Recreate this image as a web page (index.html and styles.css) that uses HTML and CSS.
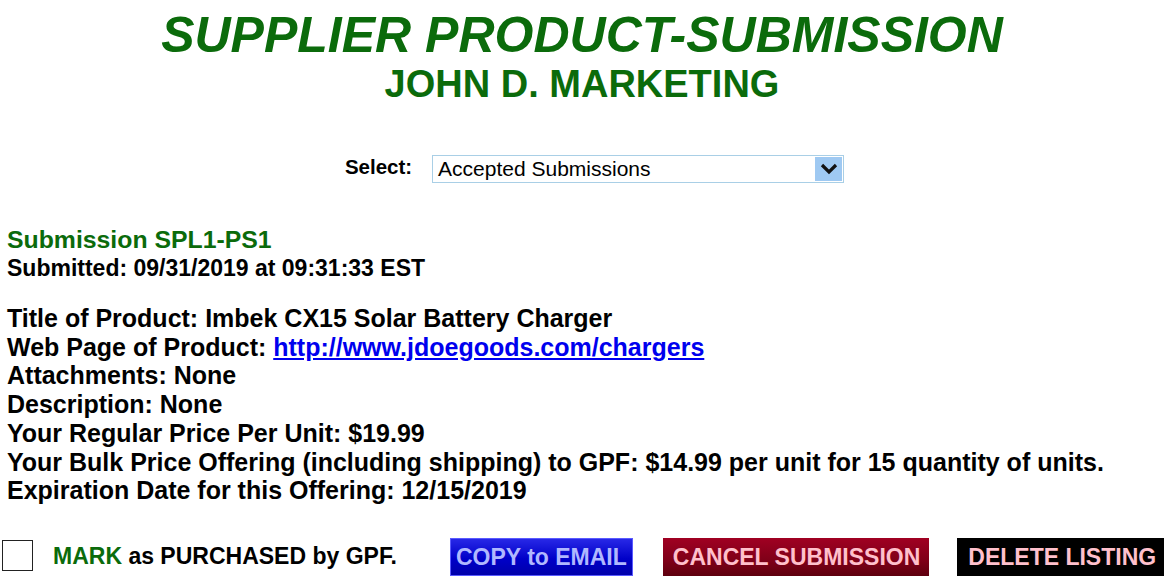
FILE: index.html
```html
<!DOCTYPE html>
<html>
<head>
<meta charset="utf-8">
<link rel="stylesheet" href="styles.css">
</head>
<body>
<header class="head">
  <h1 class="title">SUPPLIER PRODUCT-SUBMISSION</h1>
  <h2 class="subtitle">JOHN D. MARKETING</h2>
</header>
<div class="select-row">
  <label class="select-label">Select:</label>
  <div class="select-box">
    <span class="select-value">Accepted Submissions</span>
    <span class="select-arrow">
      <svg width="18" height="12" viewBox="0 0 18 12"><path d="M2 2 L9 9 L16 2" fill="none" stroke="#111" stroke-width="3.2"/></svg>
    </span>
  </div>
</div>
<section class="submission">
  <div class="sub-id">Submission SPL1-PS1</div>
  <div class="sub-date">Submitted: 09/31/2019 at 09:31:33 EST</div>
</section>
<section class="details">
  <div>Title of Product: Imbek CX15 Solar Battery Charger</div>
  <div>Web Page of Product: <a href="#">http://www.jdoegoods.com/chargers</a></div>
  <div>Attachments: None</div>
  <div>Description: None</div>
  <div>Your Regular Price Per Unit: $19.99</div>
  <div>Your Bulk Price Offering (including shipping) to GPF: $14.99 per unit for 15 quantity of units.</div>
  <div>Expiration Date for this Offering: 12/15/2019</div>
</section>
<div class="actions">
  <span class="check"></span>
  <span class="mark"><span class="green">MARK</span> as PURCHASED by GPF.</span>
  <span class="btn btn-blue">COPY to EMAIL</span>
  <span class="btn btn-red">CANCEL SUBMISSION</span>
  <span class="btn btn-black">DELETE LISTING</span>
</div>
</body>
</html>
```
FILE: styles.css
```css
html, body {
  margin: 0;
  padding: 0;
  background: #fff;
  font-family: "Liberation Sans", Arial, sans-serif;
  color: #000;
  overflow: hidden;
}
.head {
  text-align: center;
  padding-top: 8px;
}
.title {
  margin: 0;
  font-size: 50px;
  font-style: italic;
  font-weight: bold;
  color: #0b6b0b;
  line-height: 54px;
}
.subtitle {
  margin: 0;
  font-size: 38px;
  font-weight: bold;
  color: #0b6b0b;
  line-height: 44px;
}
.select-row {
  display: flex;
  justify-content: center;
  align-items: flex-start;
  gap: 20px;
  margin-top: 49px;
  padding-left: 25px;
}
.select-label {
  font-size: 20.5px;
  font-weight: bold;
  line-height: 24px;
}
.select-box {
  width: 410px;
  height: 26px;
  border: 1px solid #a9cfe6;
  display: flex;
  align-items: center;
  justify-content: space-between;
}
.select-value {
  font-size: 21px;
  padding-left: 5px;
}
.select-arrow {
  width: 27px;
  height: 24px;
  margin-right: 1px;
  background: #9fc9f2;
  display: flex;
  align-items: center;
  justify-content: center;
}
.submission {
  margin-top: 43px;
  padding-left: 7px;
  font-weight: bold;
  line-height: 28px;
}
.sub-id { color: #0b6b0b; font-size: 24.8px; }
.sub-date { font-size: 23px; }
.details {
  margin-top: 22px;
  padding-left: 7px;
  font-size: 25px;
  font-weight: bold;
  line-height: 28.7px;
}
.details a { color: #0000ee; }
.actions {
  display: flex;
  align-items: flex-start;
  margin-top: 33px;
  padding-left: 2px;
}
.check {
  width: 29px;
  height: 29px;
  border: 1px solid #222;
  flex: none;
  margin-top: 2px;
}
.mark {
  margin-left: 20px;
  font-size: 23px;
  font-weight: bold;
  line-height: 36px;
  width: 397px;
  flex: none;
}
.green { color: #0b6b0b; }
.btn {
  font-size: 23px;
  font-weight: bold;
  line-height: 38px;
  flex: none;
}
.btn-blue {
  background: linear-gradient(#2a2ae8, #0000c8 55%, #0000a8);
  color: #b0b8ff;
  box-shadow: inset 0 0 0 1px #5a5aff;
  padding: 0 6px 0 6px;
}
.btn-red {
  margin-left: 30px;
  background: linear-gradient(#a00022, #7e0018 60%, #5e000e);
  color: #ffc0cc;
  padding: 0 9px 0 10px;
}
.btn-black {
  margin-left: 28px;
  background: #000;
  color: #ffc0cc;
  padding: 0 14px 0 11px;
}
```
